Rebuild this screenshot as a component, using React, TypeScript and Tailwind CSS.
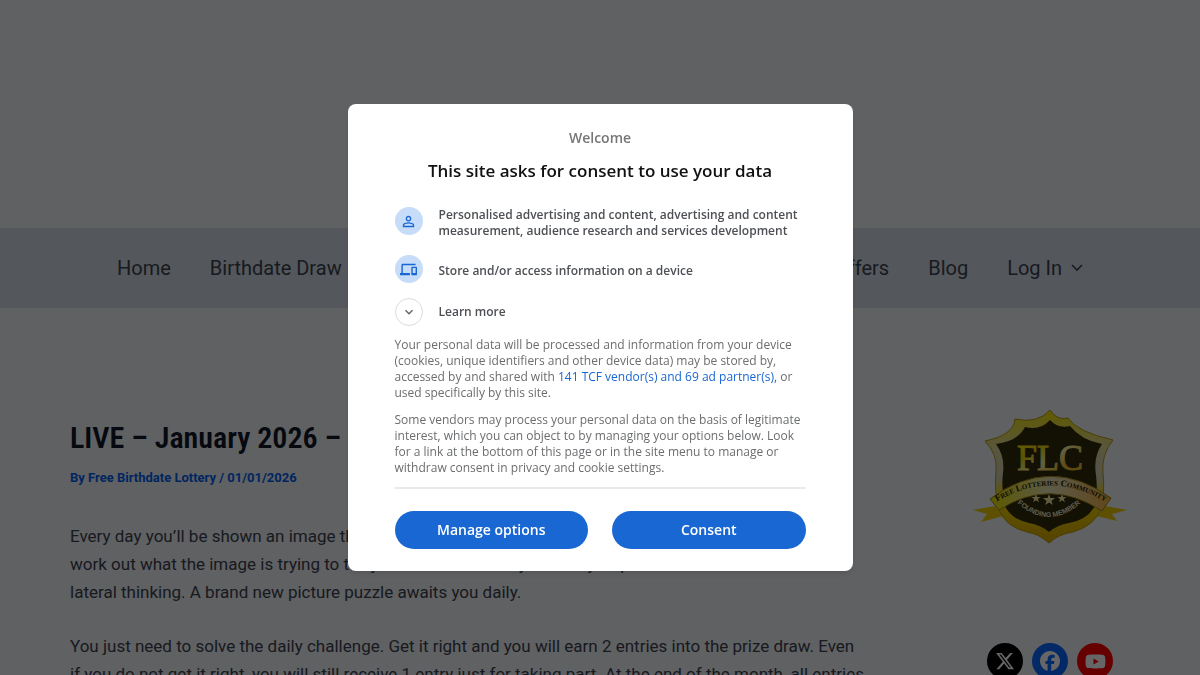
import type { ReactNode } from "react";
import { FaFacebook, FaXTwitter, FaYoutube } from "react-icons/fa6";
import { MdDevices, MdExpandMore, MdPersonOutline } from "react-icons/md";

function Shield() {
  return (
    <svg viewBox="0 0 170 150" className="h-[150px] w-[170px]" role="img" aria-label="Free Lotteries Community founding member">
      <defs>
        <linearGradient id="gold" x1="0" y1="0" x2="1" y2="1">
          <stop offset="0" stopColor="#fff200" />
          <stop offset="0.3" stopColor="#e6cf10" />
          <stop offset="0.5" stopColor="#fbf3a0" />
          <stop offset="0.75" stopColor="#e8b820" />
          <stop offset="1" stopColor="#e0c860" />
        </linearGradient>
        <linearGradient id="rim" x1="0" y1="0" x2="0" y2="1">
          <stop offset="0" stopColor="#f2e200" />
          <stop offset="0.3" stopColor="#ddd6a0" />
          <stop offset="0.5" stopColor="#cfcfb8" />
          <stop offset="0.65" stopColor="#efd800" />
          <stop offset="1" stopColor="#d8a800" />
        </linearGradient>
        <linearGradient id="ribbon" x1="0" y1="0" x2="1" y2="0">
          <stop offset="0" stopColor="#e8e000" />
          <stop offset="0.5" stopColor="#e8e2b8" />
          <stop offset="1" stopColor="#f0b040" />
        </linearGradient>
        <path id="arc-top" d="M28 103Q85 66 144 103" />
        <path id="arc-bottom" d="M43 93Q84 139 125 93" />
      </defs>
      <path d="M8 109l22-4 8 10-22 6 6-8zM162 109l-22-4-8 10 20 5-5-7z" fill="#e8c800" />
      <path
        d="M85 9Q92 20 103 17Q112 31 148 39Q136 54 138 72Q140 92 136 108Q129 125 108 131Q94 133 84 142Q74 133 62 131Q41 126 34 109Q29 90 31 70Q33 54 20 40Q49 34 50 18Q73 23 85 9Z"
        fill="url(#rim)"
        stroke="#b89a10"
      />
      <path
        d="M85 19Q93 28 105 25Q116 39 137 43Q128 56 131 74Q133 93 130 105Q122 119 104 122Q92 124 84 131Q76 124 64 122Q46 118 40 105Q36 88 38 72Q40 55 31 43Q53 40 60 26Q75 30 85 19Z"
        fill="#30280c"
      />
      <path d="M25 98Q85 53 146 97L137 110Q85 76 34 109Z" fill="url(#ribbon)" stroke="#a08410" />
      <text
        x="85"
        y="69"
        textAnchor="middle"
        fontFamily="Liberation Serif, serif"
        fontSize="36"
        fill="url(#gold)"
        stroke="url(#gold)"
        strokeWidth="1"
      >
        FLC
      </text>
      <text fontFamily="Liberation Serif, serif" fontWeight="700" fontSize="9" fill="#251c05">
        <textPath href="#arc-top" startOffset="50%" textAnchor="middle">
          F<tspan fontSize="7">REE</tspan> L<tspan fontSize="7">OTTERIES</tspan> C<tspan fontSize="7">OMMUNITY</tspan>
        </textPath>
      </text>
      <g fill="#f2e6a0">
        <path d="M84 93l1.500 4h4.500l-3.500 3 1.300 4-3.800-2.500-3.800 2.500 1.300-4-3.500-3h4.500z" />
        <path d="M71 93l1.200 3h3.300l-2.600 2 1 3.200-2.900-2-2.900 2 1-3.200-2.600-2h3.300z" />
        <path d="M97 93l1.200 3h3.300l-2.600 2 1 3.200-2.900-2-2.900 2 1-3.200-2.600-2h3.300z" />
      </g>
      <text fontFamily="Liberation Sans, sans-serif" fontWeight="700" fontSize="7" fill="#eee6c0">
        <textPath href="#arc-bottom" startOffset="50%" textAnchor="middle">
          FOUNDING MEMBER
        </textPath>
      </text>
    </svg>
  );
}

function Purpose({ icon, children }: { icon: ReactNode; children: ReactNode }) {
  return (
    <li className="flex min-h-8 gap-4">
      <span className="flex size-7 shrink-0 items-center justify-center rounded-full bg-[#c6dcf8] text-[#1967d2]">
        {icon}
      </span>
      <span className="self-center">{children}</span>
    </li>
  );
}

function ConsentDialog() {
  return (
    <div className="fixed inset-0 flex items-center justify-center bg-black/60">
      <div
        role="dialog"
        aria-modal="true"
        aria-labelledby="consent-title"
        className="w-full max-w-[505px] rounded-lg bg-white px-[47px] pt-6 pb-[22px] font-['Open_Sans',sans-serif] shadow-md"
      >
        <p className="text-center text-sm leading-5 font-semibold text-[#757678]">Welcome</p>
        <h2 id="consent-title" className="mt-2 text-center text-[17px] leading-[30px] font-semibold text-[#111]">
          This site asks for consent to use your data
        </h2>

        <ul className="mt-[21px] flex flex-col gap-4 text-xs leading-4 font-semibold text-[#4d5054]">
          <Purpose icon={<MdPersonOutline size={17} />}>
            Personalised advertising and content, advertising and content measurement, audience research and services
            development
          </Purpose>
          <Purpose icon={<MdDevices size={17} />}>Store and/or access information on a device</Purpose>
        </ul>

        <button type="button" className="mt-[11px] flex items-center gap-4 text-xs leading-4 font-semibold text-[#4d5054]">
          <span className="flex size-7 items-center justify-center rounded-full border border-[#dadce0] text-[#5f6368]">
            <MdExpandMore size={16} />
          </span>
          Learn more
        </button>

        <div className="mt-[11px] flex flex-col gap-[11px] text-xs leading-4 text-[#6c6d6f]">
          <p>
            Your personal data will be processed and information from your device (cookies, unique identifiers and
            other device data) may be stored by, accessed by and shared with{" "}
            <a href="#vendors" className="text-[#1967d2]">
              141 TCF vendor(s) and 69 ad partner(s),
            </a>{" "}
            or used specifically by this site.
          </p>
          <p>
            Some vendors may process your personal data on the basis of legitimate interest, which you can object to
            by managing your options below. Look for a link at the bottom of this page or in the site menu to manage
            or withdraw consent in privacy and cookie settings.
          </p>
        </div>

        <div className="mt-[11px] flex gap-6 border-t-2 border-[#e8eaed] pt-[22px] text-sm font-semibold text-white">
          <button type="button" className="h-[38px] flex-1 rounded-full bg-[#1967d2]">
            Manage options
          </button>
          <button type="button" className="h-[38px] flex-1 rounded-full bg-[#1967d2]">
            Consent
          </button>
        </div>
      </div>
    </div>
  );
}

export default function App() {
  return (
    <div className="h-screen overflow-hidden bg-[#f0f2f5] font-[Roboto,sans-serif] text-[#3c4350]">
      <header className="pt-57">
        <nav className="flex h-20 items-center justify-between bg-[#d2dce6] px-[117px] text-xl">
          <div className="flex gap-[39px]">
            <a href="#home">Home</a>
            <a href="#birthdate-draw">Birthdate Draw</a>
          </div>
          <div className="flex gap-[39px]">
            <a href="#offers">Offers</a>
            <a href="#blog">Blog</a>
            <a href="#login" className="flex items-center gap-[9px]">
              Log In
              <svg viewBox="0 0 12 8" className="w-3" fill="none" stroke="currentColor" strokeWidth="1.6">
                <path d="M1 1l5 5 5-5" />
              </svg>
            </a>
          </div>
        </nav>
      </header>

      <main className="flex justify-between px-[70px] pt-[110px]">
        <article className="w-[800px] shrink-0">
          <h1 className="font-['Roboto_Condensed','Liberation_Sans_Narrow',sans-serif] text-3xl leading-10 font-semibold text-[#0f172a]">
            LIVE – January 2026 –
          </h1>
          <p className="mt-2.5 text-[13px] leading-5 font-bold text-[#0060f0]">
            By{" "}
            <a href="#author">Free Birthdate Lottery</a> / 01/01/2026
          </p>
          <div className="mt-[34px] flex flex-col gap-[26px] text-[17px] leading-7">
            <p>
              Every day you’ll be shown an image that represents a word or phrase. Can you
              <br />
              work out what the image is trying to tell you? Some are tricky and may require
              <br />
              lateral thinking. A brand new picture puzzle awaits you daily.
            </p>
            <p>
              You just need to solve the daily challenge. Get it right and you will earn 2 entries into the prize draw.
              Even
              <br />
              if you do not get it right, you will still receive 1 entry just for taking part. At the end of the month,
              all entries
            </p>
          </div>
        </article>

        <aside className="-mr-[5px] flex flex-col items-center">
          <div className="-mt-[17px]">
            <Shield />
          </div>
          <div className="mt-23 flex gap-[9px] text-white">
            <a href="#x" aria-label="X" className="flex size-9 items-center justify-center rounded-full bg-black">
              <FaXTwitter size={20} />
            </a>
            <a href="#facebook" aria-label="Facebook" className="flex size-9 items-center justify-center rounded-full bg-[#0866ff]">
              <FaFacebook size={20} />
            </a>
            <a href="#youtube" aria-label="YouTube" className="flex size-9 items-center justify-center rounded-full bg-[#ff0000]">
              <FaYoutube size={21} />
            </a>
          </div>
        </aside>
      </main>

      <ConsentDialog />
    </div>
  );
}
